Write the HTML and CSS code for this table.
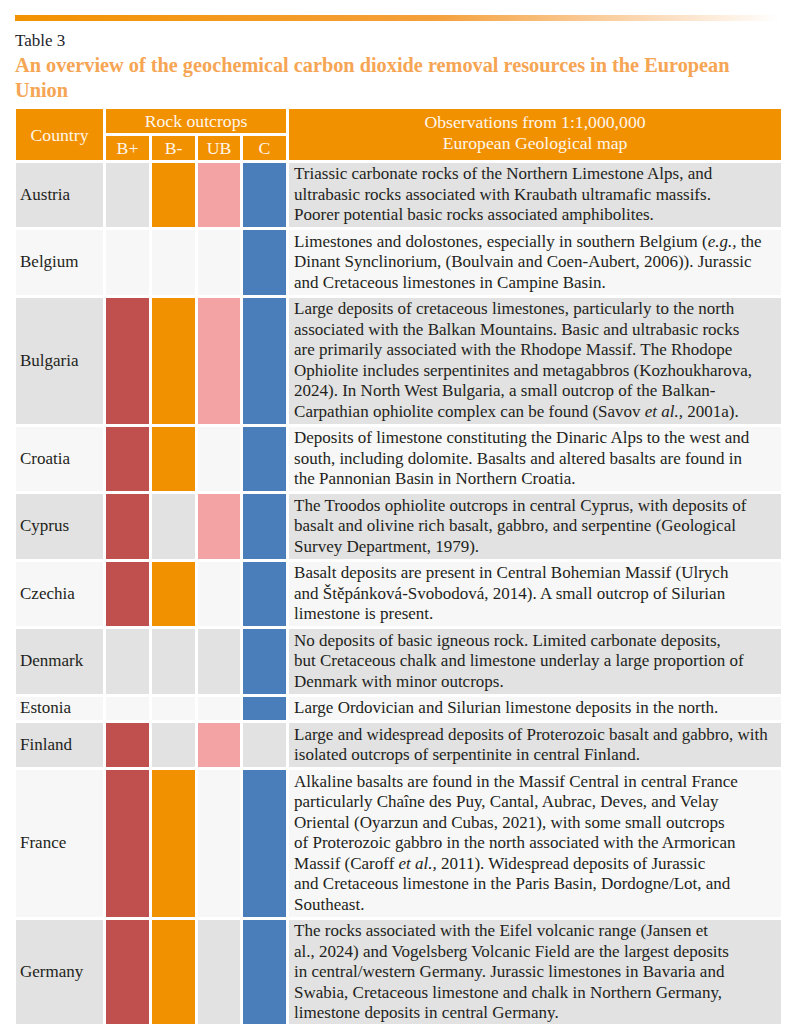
FILE: index.html
```html
<!DOCTYPE html>
<html lang="en">
<head>
<meta charset="utf-8">
<title>Table 3</title>
<link rel="stylesheet" href="styles.css">
</head>
<body>
<div class="page">
  <div class="topbar"></div>
  <p class="label">Table 3</p>
  <h1 class="title">An overview of the geochemical carbon dioxide removal resources in the European<br>Union</h1>
  <table class="tbl">
    <colgroup>
      <col class="c-country">
      <col class="c-rock">
      <col class="c-rock">
      <col class="c-rock-n">
      <col class="c-rock">
      <col class="c-obs">
    </colgroup>
    <thead>
      <tr>
        <th rowspan="2">Country</th>
        <th colspan="4">Rock outcrops</th>
        <th rowspan="2" class="obs-h">Observations from 1:1,000,000<br>European Geological map</th>
      </tr>
      <tr>
        <th>B+</th><th>B-</th><th>UB</th><th>C</th>
      </tr>
    </thead>
    <tbody>
      <tr class="dark">
        <td class="country">Austria</td>
        <td></td><td class="bm"></td><td class="ub"></td><td class="c"></td>
        <td class="obs">Triassic carbonate rocks of the Northern Limestone Alps, and<br>ultrabasic rocks associated with Kraubath ultramafic massifs.<br>Poorer potential basic rocks associated amphibolites.</td>
      </tr>
      <tr class="light">
        <td class="country">Belgium</td>
        <td></td><td></td><td></td><td class="c"></td>
        <td class="obs">Limestones and dolostones, especially in southern Belgium (<i>e.g.,</i> the<br>Dinant Synclinorium, (Boulvain and Coen-Aubert, 2006)). Jurassic<br>and Cretaceous limestones in Campine Basin.</td>
      </tr>
      <tr class="dark">
        <td class="country">Bulgaria</td>
        <td class="bp"></td><td class="bm"></td><td class="ub"></td><td class="c"></td>
        <td class="obs">Large deposits of cretaceous limestones, particularly to the north<br>associated with the Balkan Mountains. Basic and ultrabasic rocks<br>are primarily associated with the Rhodope Massif. The Rhodope<br>Ophiolite includes serpentinites and metagabbros (Kozhoukharova,<br>2024). In North West Bulgaria, a small outcrop of the Balkan-<br>Carpathian ophiolite complex can be found (Savov <i>et al.,</i> 2001a).</td>
      </tr>
      <tr class="light">
        <td class="country">Croatia</td>
        <td class="bp"></td><td class="bm"></td><td></td><td class="c"></td>
        <td class="obs">Deposits of limestone constituting the Dinaric Alps to the west and<br>south, including dolomite. Basalts and altered basalts are found in<br>the Pannonian Basin in Northern Croatia.</td>
      </tr>
      <tr class="dark">
        <td class="country">Cyprus</td>
        <td class="bp"></td><td></td><td class="ub"></td><td class="c"></td>
        <td class="obs">The Troodos ophiolite outcrops in central Cyprus, with deposits of<br>basalt and olivine rich basalt, gabbro, and serpentine (Geological<br>Survey Department, 1979).</td>
      </tr>
      <tr class="light">
        <td class="country">Czechia</td>
        <td class="bp"></td><td class="bm"></td><td></td><td class="c"></td>
        <td class="obs">Basalt deposits are present in Central Bohemian Massif (Ulrych<br>and Štěpánková-Svobodová, 2014). A small outcrop of Silurian<br>limestone is present.</td>
      </tr>
      <tr class="dark">
        <td class="country">Denmark</td>
        <td></td><td></td><td></td><td class="c"></td>
        <td class="obs">No deposits of basic igneous rock. Limited carbonate deposits,<br>but Cretaceous chalk and limestone underlay a large proportion of<br>Denmark with minor outcrops.</td>
      </tr>
      <tr class="light">
        <td class="country">Estonia</td>
        <td></td><td></td><td></td><td class="c"></td>
        <td class="obs">Large Ordovician and Silurian limestone deposits in the north.</td>
      </tr>
      <tr class="dark">
        <td class="country">Finland</td>
        <td class="bp"></td><td></td><td class="ub"></td><td></td>
        <td class="obs">Large and widespread deposits of Proterozoic basalt and gabbro, with<br>isolated outcrops of serpentinite in central Finland.</td>
      </tr>
      <tr class="light">
        <td class="country">France</td>
        <td class="bp"></td><td class="bm"></td><td></td><td class="c"></td>
        <td class="obs">Alkaline basalts are found in the Massif Central in central France<br>particularly Chaîne des Puy, Cantal, Aubrac, Deves, and Velay<br>Oriental (Oyarzun and Cubas, 2021), with some small outcrops<br>of Proterozoic gabbro in the north associated with the Armorican<br>Massif (Caroff <i>et al.,</i> 2011). Widespread deposits of Jurassic<br>and Cretaceous limestone in the Paris Basin, Dordogne/Lot, and<br>Southeast.</td>
      </tr>
      <tr class="dark">
        <td class="country">Germany</td>
        <td class="bp"></td><td class="bm"></td><td></td><td class="c"></td>
        <td class="obs">The rocks associated with the Eifel volcanic range (Jansen et<br>al., 2024) and Vogelsberg Volcanic Field are the largest deposits<br>in central/western Germany. Jurassic limestones in Bavaria and<br>Swabia, Cretaceous limestone and chalk in Northern Germany,<br>limestone deposits in central Germany.</td>
      </tr>
    </tbody>
  </table>
</div>
</body>
</html>
```

FILE: styles.css
```css
html, body {
  margin: 0;
  padding: 0;
  background: #ffffff;
}

.page {
  width: 765px;
  padding: 15px 0 0 15px;
  font-family: "Liberation Serif", "Times New Roman", serif;
}

.topbar {
  height: 6px;
  background: linear-gradient(to right, #f39200 0%, #f4a03c 55%, rgba(250, 200, 150, 0.6) 85%, rgba(255, 255, 255, 0) 100%);
}

.label {
  margin: 10px 0 0 0;
  font-size: 17px;
  line-height: 20px;
  color: #1e1e2c;
}

.title {
  margin: 2px 0 0 0;
  font-size: 20.3px;
  line-height: 25px;
  font-weight: bold;
  color: #f5a553;
}

.tbl {
  margin: 3px 0 0 -2px;
  width: 771px;
  table-layout: fixed;
  border-collapse: separate;
  border-spacing: 3px;
  font-size: 17px;
  color: #231f20;
}

.c-country { width: 87px; }
.c-rock { width: 43px; }
.c-rock-n { width: 42px; }
.c-obs { width: 492px; }

.tbl th {
  background: #f29100;
  color: #fff6ea;
  font-weight: normal;
  font-size: 17.7px;
  line-height: 24px;
  padding: 0;
  text-align: center;
  vertical-align: middle;
}

.tbl th.obs-h {
  line-height: 21px;
  padding-bottom: 4px;
}

.tbl td {
  padding: 0;
  vertical-align: middle;
}

.dark td { background: #e2e2e2; }
.light td { background: #f7f7f7; }

.tbl td.country {
  padding: 0 4px;
  line-height: 20.5px;
}

.tbl td.obs {
  padding: 1.2px 5px 1.8px 5px;
  line-height: 20.5px;
  white-space: nowrap;
}

.tbl td.bp { background: #c0504d; }
.tbl td.bm { background: #f29100; }
.tbl td.ub { background: #f4a3a5; }
.tbl td.c { background: #4a7ebb; }
```
